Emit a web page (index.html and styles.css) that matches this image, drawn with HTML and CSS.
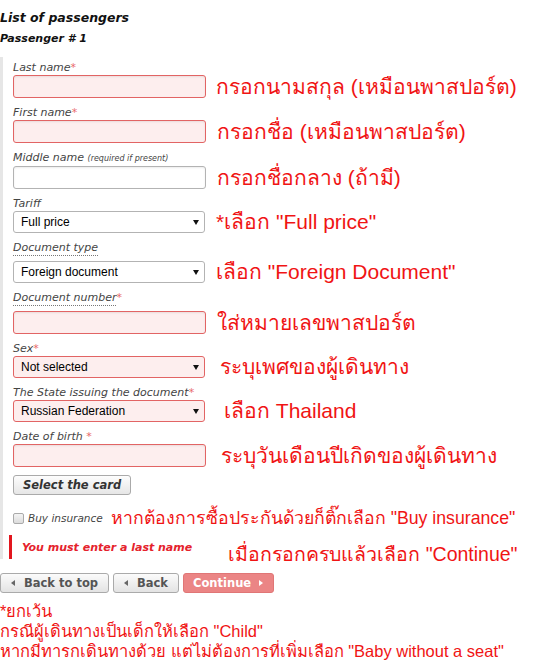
FILE: index.html
```html
<!DOCTYPE html>
<html lang="en">
<head>
    <meta charset="UTF-8">
    <meta name="viewport" content="width=device-width, initial-scale=1.0">
    <title>List of passengers</title>
    <link rel="stylesheet" href="styles.css">
</head>
<body>
    <h1 class="title">List of passengers</h1>
    <h2 class="subtitle">Passenger # 1</h2>

    <div class="passenger">
        <div class="field">
            <label>Last name<span class="req">*</span></label>
            <div class="row">
                <input type="text" class="input invalid">
                <span class="note note-first">กรอกนามสกุล (เหมือนพาสปอร์ต)</span>
            </div>
        </div>

        <div class="field">
            <label>First name<span class="req">*</span></label>
            <div class="row">
                <input type="text" class="input invalid">
                <span class="note">กรอกชื่อ (เหมือนพาสปอร์ต)</span>
            </div>
        </div>

        <div class="field">
            <label>Middle name <small>(required if present)</small></label>
            <div class="row">
                <input type="text" class="input">
                <span class="note">กรอกชื่อกลาง (ถ้ามี)</span>
            </div>
        </div>

        <div class="field">
            <label>Tariff</label>
            <div class="row">
                <div class="select-wrap">
                    <select class="select"><option>Full price</option></select>
                </div>
                <span class="note">*เลือก "Full price"</span>
            </div>
        </div>

        <div class="field">
            <label class="label-hint"><span class="hint">Document type</span></label>
            <div class="row">
                <div class="select-wrap">
                    <select class="select"><option>Foreign document</option></select>
                </div>
                <span class="note">เลือก "Foreign Document"</span>
            </div>
        </div>

        <div class="field">
            <label class="label-hint"><span class="hint">Document number</span><span class="req">*</span></label>
            <div class="row">
                <input type="text" class="input invalid">
                <span class="note">ใส่หมายเลขพาสปอร์ต</span>
            </div>
        </div>

        <div class="field">
            <label>Sex<span class="req">*</span></label>
            <div class="row">
                <div class="select-wrap">
                    <select class="select invalid"><option>Not selected</option></select>
                </div>
                <span class="note note-far">ระบุเพศของผู้เดินทาง</span>
            </div>
        </div>

        <div class="field">
            <label>The State issuing the document<span class="req">*</span></label>
            <div class="row">
                <div class="select-wrap">
                    <select class="select invalid"><option>Russian Federation</option></select>
                </div>
                <span class="note note-farther">เลือก Thailand</span>
            </div>
        </div>

        <div class="field">
            <label>Date of birth <span class="req">*</span></label>
            <div class="row">
                <input type="text" class="input invalid">
                <span class="note note-far">ระบุวันเดือนปีเกิดของผู้เดินทาง</span>
            </div>
        </div>

        <button type="button" class="btn-card">Select the card</button>

        <div class="insurance">
            <input type="checkbox" class="check">
            <span class="insurance-label">Buy insurance</span>
            <span class="note note-small">หากต้องการซื้อประกันด้วยก็ติ๊กเลือก "Buy insurance"</span>
        </div>

        <div class="error">
            <span>You must enter a last name</span>
            <span class="note note-continue">เมื่อกรอกครบแล้วเลือก "Continue"</span>
        </div>
    </div>

    <div class="actions">
        <button type="button" class="btn"><span class="arrow-left"></span>Back to top</button>
        <button type="button" class="btn"><span class="arrow-left"></span>Back</button>
        <button type="button" class="btn btn-primary">Continue<span class="arrow-right"></span></button>
    </div>

    <div class="footnote">
        <div>*ยกเว้น</div>
        <div>กรณีผู้เดินทางเป็นเด็กให้เลือก "Child"</div>
        <div>หากมีทารกเดินทางด้วย แต่ไม่ต้องการที่เพิ่มเลือก "Baby without a seat"</div>
    </div>
</body>
</html>
```

FILE: styles.css
```css
body {
    margin: 0;
    padding: 10px 0 0;
    font-family: "DejaVu Sans", Verdana, sans-serif;
    color: #222;
    background: #fff;
}

.title {
    margin: 0;
    font-size: 12.5px;
    line-height: 15px;
    font-style: italic;
    font-weight: bold;
    color: #111;
}
.subtitle {
    margin: 7px 0 0;
    font-size: 11px;
    line-height: 13px;
    font-style: italic;
    font-weight: bold;
    color: #111;
}

.passenger {
    margin-top: 12px;
    border-left: 3px solid #e6e6e6;
    padding: 4px 0 0 10px;
}

.field {
    margin-bottom: 8px;
}
.field label {
    display: block;
    font-size: 11px;
    line-height: 13px;
    font-style: italic;
    color: #444;
    margin-bottom: 1px;
}
.field label small {
    font-size: 8px;
}
.field .label-hint {
    margin-bottom: 7px;
}
.hint {
    border-bottom: 1px dotted #777;
    padding-bottom: 1px;
}
.req {
    color: #e96a6a;
}

.row {
    display: flex;
    align-items: center;
}

.input {
    box-sizing: border-box;
    width: 193px;
    height: 23px;
    margin: 0;
    border: 1px solid #b3b3b3;
    border-radius: 3px;
    background: #fff;
    box-shadow: inset 0 1px 2px rgba(0, 0, 0, 0.08);
}
.input.invalid,
.select.invalid {
    border-color: #e26464;
    background: #fdeeee;
}

.select-wrap {
    position: relative;
    width: 192px;
    height: 22px;
}
.select-wrap::after {
    content: "";
    position: absolute;
    right: 6px;
    top: 9px;
    border-left: 3px solid transparent;
    border-right: 3px solid transparent;
    border-top: 5px solid #111;
}
.select {
    appearance: none;
    -webkit-appearance: none;
    box-sizing: border-box;
    width: 100%;
    height: 22px;
    margin: 0;
    padding: 0 0 0 7px;
    border: 1px solid #b3b3b3;
    border-radius: 3px;
    background: #fff;
    color: #000;
    font-family: "Liberation Sans", Arial, sans-serif;
    font-size: 12px;
}

.note {
    flex-shrink: 0;
    margin-left: 11px;
    color: #f01414;
    font-family: "Liberation Sans", Arial, "Noto Sans", sans-serif;
    font-size: 21px;
    line-height: 20px;
    font-style: normal;
    font-weight: normal;
    white-space: nowrap;
}
.note-first {
    margin-left: 10px;
}
.note-far {
    margin-left: 15px;
}
.note-farther {
    margin-left: 19px;
}

.btn-card {
    display: block;
    box-sizing: border-box;
    height: 20px;
    margin: 0;
    padding: 0 9px;
    border: 1px solid #aaa;
    border-radius: 3px;
    background: linear-gradient(#fdfdfd, #e6e6e6);
    color: #333;
    font-family: "DejaVu Sans", Verdana, sans-serif;
    font-size: 11.5px;
    font-style: italic;
    font-weight: bold;
}

.insurance {
    display: flex;
    align-items: center;
    height: 14px;
    margin-top: 16px;
    font-size: 10.5px;
    font-style: italic;
    color: #444;
}
.insurance-label {
    flex-shrink: 0;
    white-space: nowrap;
}
.check {
    flex-shrink: 0;
    appearance: none;
    -webkit-appearance: none;
    box-sizing: border-box;
    width: 11px;
    height: 11px;
    margin: 0 4px 0 0;
    border: 1px solid #aaa;
    border-radius: 2px;
    background: linear-gradient(#f4f4f4, #dcdcdc);
}
.note-small {
    margin-left: 8px;
    font-size: 17.7px;
}

.error {
    display: flex;
    align-items: center;
    height: 24px;
    margin: 10px 0 0 -4px;
    padding-left: 10px;
    border-left: 3px solid #e2161e;
    color: #e5222c;
    font-size: 11px;
    font-style: italic;
    font-weight: bold;
}
.note-continue {
    align-self: flex-start;
    margin: 7px 0 0 36px;
    font-size: 19.5px;
    line-height: 24px;
}

.actions {
    display: flex;
    gap: 4px;
    margin-top: 14px;
}
.btn {
    display: flex;
    align-items: center;
    gap: 9px;
    box-sizing: border-box;
    height: 20px;
    margin: 0;
    padding: 0 10px;
    border: 1px solid #aaa;
    border-radius: 3px;
    background: linear-gradient(#fbfbfb, #e3e3e3);
    color: #555;
    font-family: "DejaVu Sans", Verdana, sans-serif;
    font-size: 11.5px;
    font-weight: bold;
}
.btn-primary {
    gap: 8px;
    padding: 0 10px 0 9px;
    border-color: #e07676;
    background: #eb8585;
    color: #fff;
}
.arrow-left {
    border-top: 3px solid transparent;
    border-bottom: 3px solid transparent;
    border-right: 4px solid #666;
}
.arrow-right {
    border-top: 3px solid transparent;
    border-bottom: 3px solid transparent;
    border-left: 4px solid #fff;
}

.footnote {
    margin-top: 8px;
    color: #f01414;
    font-family: "Liberation Sans", Arial, "Noto Sans", sans-serif;
    font-size: 16.5px;
    line-height: 20px;
}
```
